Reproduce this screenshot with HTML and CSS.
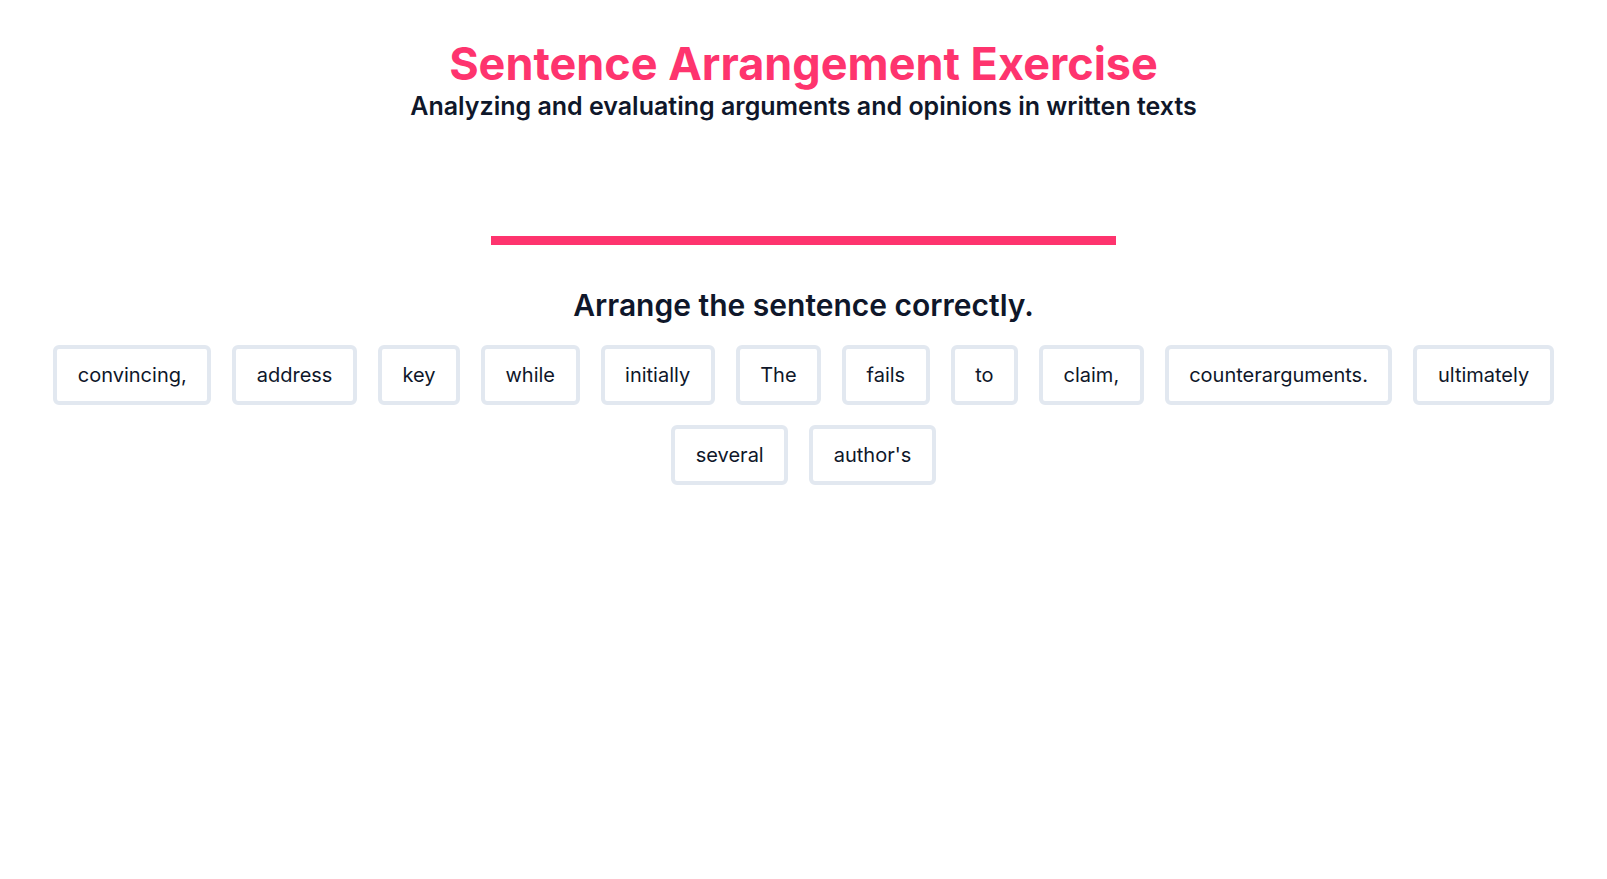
FILE: index.html
```html
<!DOCTYPE html>
<html lang="en">
<head>
<meta charset="utf-8">
<title>Sentence Arrangement Exercise</title>
<link rel="stylesheet" href="styles.css">
</head>
<body>
<main class="page">
  <header class="header">
    <h1 class="title">Sentence Arrangement Exercise</h1>
    <p class="subtitle">Analyzing and evaluating arguments and opinions in written texts</p>
  </header>
  <div class="answer-area"></div>
  <div class="bar"></div>
  <h2 class="prompt">Arrange the sentence correctly.</h2>
  <div class="words">
    <button class="word">convincing,</button>
    <button class="word">address</button>
    <button class="word">key</button>
    <button class="word">while</button>
    <button class="word">initially</button>
    <button class="word">The</button>
    <button class="word">fails</button>
    <button class="word">to</button>
    <button class="word">claim,</button>
    <button class="word">counterarguments.</button>
    <button class="word">ultimately</button>
    <button class="word">several</button>
    <button class="word">author's</button>
  </div>
</main>
</body>
</html>
```
FILE: styles.css
```css
* { box-sizing: border-box; }
html, body { margin: 0; padding: 0; background: #ffffff; }
body {
  font-family: Inter, "Noto Sans", sans-serif;
  color: #0f172a;
}
.page {
  display: flex;
  flex-direction: column;
  align-items: center;
  padding-top: 38px;
}
.header { text-align: center; }
.title {
  margin: 0;
  font-size: 45px;
  line-height: 52px;
  font-weight: 700;
  color: #fe346e;
}
.subtitle {
  margin: 0;
  font-size: 25px;
  line-height: 33px;
  font-weight: 600;
  color: #0f172a;
}
.answer-area {
  height: 113px;
}
.bar {
  width: 625px;
  height: 9px;
  background: #fe346e;
}
.prompt {
  margin: 42px 0 0;
  font-size: 30px;
  line-height: 36px;
  font-weight: 600;
  color: #0f172a;
}
.words {
  display: flex;
  flex-wrap: wrap;
  justify-content: center;
  gap: 20px 21px;
  margin-top: 22px;
  padding: 0 30px;
}
.word {
  font-family: Inter, "Noto Sans", sans-serif;
  font-size: 20px;
  line-height: 28px;
  color: #0f172a;
  background: #ffffff;
  border: 4px solid #e2e8f0;
  border-radius: 6px;
  padding: 12px 20.5px;
  cursor: pointer;
}
```
